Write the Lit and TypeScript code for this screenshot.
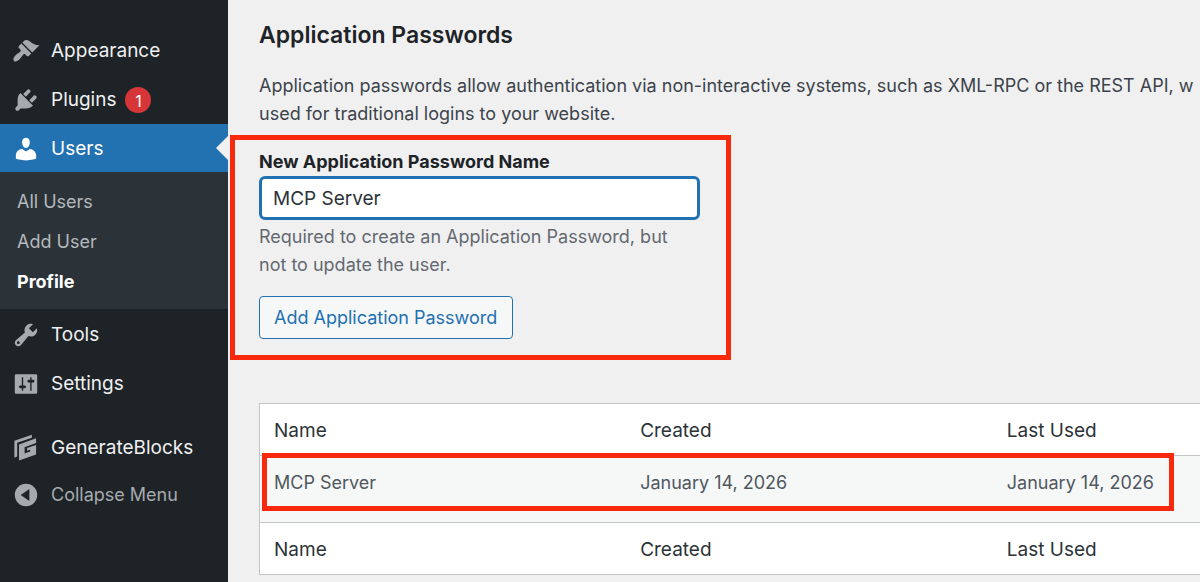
import { LitElement, html, css, svg, nothing } from "lit";
import { customElement, property, state } from "lit/decorators.js";
import { classMap } from "lit/directives/class-map.js";

const icons: Record<string, unknown> = {
  appearance: svg`<path d="M14.48 11.06L7.41 3.99l1.5-1.5c.5-.56 2.3-.47 3.51.32 1.21.8 1.43 1.28 2.91 2.1 1.18.64 2.45 1.26 4.45.85zm-.71.71L6.7 4.7 4.93 6.47c-.39.39-.39 1.02 0 1.41l1.06 1.06c.39.39.39 1.03 0 1.42-.6.6-1.43 1.11-2.21 1.69-.35.26-.7.53-1.01.84C1.43 14.23.4 16.08 1.4 17.07c.99 1 2.84-.03 4.18-1.36.31-.31.58-.66.85-1.02.57-.78 1.08-1.61 1.69-2.21.39-.39 1.02-.39 1.41 0l1.06 1.06c.39.39 1.02.39 1.41 0z"/>`,
  plugins: svg`<path d="M13.11 4.36L9.87 7.6 8 5.73l3.24-3.24c.35-.34 1.05-.2 1.56.32.52.51.66 1.21.31 1.55zm-8 1.77l.91-1.12 9.01 9.01-1.19.84c-.71.71-2.63 1.16-3.82 1.16H6.14L4.9 17.26c-.59.59-1.54.59-2.12 0-.59-.58-.59-1.53 0-2.12l1.24-1.24v-3.88c0-1.13.4-3.19 1.09-3.89zm7.26 3.97l3.24-3.24c.34-.35 1.04-.21 1.55.31.52.51.66 1.21.31 1.55l-3.24 3.25z"/>`,
  users: svg`<path d="M10 9.25c-2.27 0-2.73-3.44-2.73-3.44C7 4.02 7.82 2 9.97 2c2.16 0 2.98 2.02 2.71 3.81 0 0-.41 3.44-2.68 3.44zm0 2.57L12.72 10c2.39 0 4.52 2.33 4.52 4.53v2.49s-3.65 1.13-7.24 1.13c-3.65 0-7.24-1.13-7.24-1.13v-2.49c0-2.25 1.94-4.48 4.47-4.48z"/>`,
  tools: svg`<path d="M16.68 9.77c-1.34 1.34-3.3 1.67-4.95.99l-5.41 6.52c-.99.99-2.59.99-3.58 0s-.99-2.59 0-3.57l6.52-5.42c-.68-1.65-.35-3.61.99-4.95 1.28-1.28 3.12-1.62 4.72-1.06l-2.89 2.89 2.82 2.82 2.86-2.87c.53 1.58.18 3.39-1.08 4.65zM3.81 16.21c.4.39 1.04.39 1.43 0 .4-.4.4-1.04 0-1.43-.39-.4-1.03-.4-1.43 0-.39.39-.39 1.03 0 1.43z"/>`,
  settings: svg`<path d="M18 16V4c0-.55-.45-1-1-1H3c-.55 0-1 .45-1 1v12c0 .55.45 1 1 1h14c.55 0 1-.45 1-1zM8 11h1c.55 0 1 .45 1 1s-.45 1-1 1H8v1.5c0 .28-.22.5-.5.5s-.5-.22-.5-.5V13H6c-.55 0-1-.45-1-1s.45-1 1-1h1V5.5c0-.28.22-.5.5-.5s.5.22.5.5V11zm5-2h-1c-.55 0-1-.45-1-1s.45-1 1-1h1V5.5c0-.28.22-.5.5-.5s.5.22.5.5V7h1c.55 0 1 .45 1 1s-.45 1-1 1h-1v5.5c0 .28-.22.5-.5.5s-.5-.22-.5-.5V9z"/>`,
  blocks: svg`<path d="M1.7 4.9L14.2.6v2L3.7 6.3v9.8l-2 .8z"/><path d="M5 7.5L17.2 3.1v3.4L9 9.4v4.5l4-1.4v-1.3l-2.2.8V10l6.4-2.2v6.8L5 18.9z"/>`,
  collapse: svg`<path fill-rule="evenodd" d="M10 2a8 8 0 1 1 0 16a8 8 0 1 1 0-16zM12.4 5.8v8.4L6.2 10z"/>`,
};

interface MenuItem {
  icon: string;
  label: string;
  badge?: number;
  current?: boolean;
  spaced?: boolean;
  children?: string[];
}

@customElement("admin-menu")
export class AdminMenu extends LitElement {
  @property({ attribute: false }) items: MenuItem[] = [];
  @property() page = "";

  static styles = css`
    :host { display: block; background: #1d2327; color: #f0f0f1; }
    ul { list-style: none; margin: 0; padding: 0; }
    .menu { display: flex; flex-direction: column; gap: 1px; padding-top: 26px; }
    .spaced { margin-top: 15px; }
    .link {
      display: flex; align-items: center; width: 100%; height: 48px; box-sizing: border-box;
      padding: 1px 12px 0; gap: 11px; border: 0; background: none; color: inherit;
      font: inherit; font-size: 19px; text-align: left; text-decoration: none; white-space: nowrap;
    }
    .icon { flex: none; width: 28px; height: 28px; fill: #a7aaad; }
    .current > .link { position: relative; background: #2271b1; color: #fff; }
    .current > .link .icon { fill: #fff; }
    .current > .link::after {
      content: ""; position: absolute; right: 0; top: 12px;
      border: 12px solid transparent; border-left: 0; border-right: 12px solid #f0f0f1;
    }
    .badge {
      display: grid; place-items: center; width: 26px; height: 26px; margin-left: -2px;
      border-radius: 50%; background: #d63638; color: #fff; font-size: 16px;
    }
    .submenu { padding: 10px 0 7px; background: #2c3338; }
    .sub {
      display: block; padding: 0 17px; color: #b4b9be; font-size: 18px; line-height: 40px;
      text-decoration: none;
    }
    .sub.on { color: #fff; font-weight: 700; }
    .collapse { height: 44px; color: #a7aaad; font-size: 18px; cursor: pointer; }
  `;

  private icon(name: string) {
    return html`<svg class="icon" viewBox="0 0 20 20" aria-hidden="true">${icons[name]}</svg>`;
  }

  render() {
    return html`<nav aria-label="Main menu">
      <ul class="menu">
        ${this.items.map(
          (i) => html`<li class=${classMap({ current: !!i.current, spaced: !!i.spaced })}>
            <a class="link" href="#">${this.icon(i.icon)}<span>${i.label}</span>${i.badge
              ? html`<span class="badge">${i.badge}</span>`
              : nothing}</a>
            ${i.children
              ? html`<ul class="submenu">
                  ${i.children.map(
                    (c) => html`<li><a class=${classMap({ sub: true, on: c === this.page })} href="#">${c}</a></li>`
                  )}
                </ul>`
              : nothing}
          </li>`
        )}
        <li><button class="link collapse" type="button">${this.icon("collapse")}<span>Collapse Menu</span></button></li>
      </ul>
    </nav>`;
  }
}

@customElement("app-root")
export class AppRoot extends LitElement {
  @state() private name = "MCP Server";

  private menu: MenuItem[] = [
    { icon: "appearance", label: "Appearance" },
    { icon: "plugins", label: "Plugins", badge: 1 },
    { icon: "users", label: "Users", current: true, children: ["All Users", "Add User", "Profile"] },
    { icon: "tools", label: "Tools" },
    { icon: "settings", label: "Settings" },
    { icon: "blocks", label: "GenerateBlocks", spaced: true },
  ];
  private columns = ["Name", "Created", "Last Used"];
  private rows = [["MCP Server", "January 14, 2026", "January 14, 2026"]];

  static styles = css`
    :host {
      display: grid; grid-template-columns: 228px minmax(0, 1fr); min-height: 100vh;
      background: #f0f0f1; color: #3c434a;
      font-family: Inter, "Liberation Sans", sans-serif; font-size: 18px; line-height: 28px;
    }
    main { padding: 21px 0 7px 31px; overflow: hidden; }
    h2 { margin: 0; color: #1d2327; font-size: 23px; line-height: 28px; font-weight: 600; }
    .intro { margin: 23px 0 0; white-space: nowrap; }
    .new { position: relative; width: 441px; margin-top: 20px; }
    label { display: block; color: #1d2327; font-weight: 700; }
    .name {
      display: block; width: 100%; height: 44px; box-sizing: border-box; padding: 0 11px;
      border: 3px solid #2271b1; border-radius: 6px; background: #fff; color: #2c3338;
      font: inherit; font-size: 19px; outline: 0;
    }
    .hint { margin: 3px 0 17px; color: #646970; }
    .add {
      height: 43px; padding: 0 15px 0 14px; border: 1px solid #2271b1; border-radius: 4px;
      background: #f6f7f7; color: #2271b1; font: inherit; cursor: pointer;
    }
    .mark { position: absolute; border: 5px solid #f9290e; pointer-events: none; }
    .new .mark { inset: -13px -31px -21px -29px; }
    .list { position: relative; margin-top: 64px; }
    .list .mark { inset: 50px 26px 64px 3px; }
    table {
      width: 117%; table-layout: fixed; border-collapse: collapse;
      border: 1px solid #c3c4c7; background: #fff;
    }
    th, td { padding: 0 14px; text-align: left; }
    th { height: 49px; padding-top: 2px; color: #2c3338; font-size: 19px; font-weight: 400; }
    td { height: 54px; padding-bottom: 12px; background: #f6f7f7; color: #50575e; }
    tbody tr { border-top: 1px solid #c3c4c7; border-bottom: 1px solid #c3c4c7; }
  `;

  private heads() {
    return html`<tr>${this.columns.map((c) => html`<th scope="col">${c}</th>`)}</tr>`;
  }

  render() {
    return html`
      <admin-menu .items=${this.menu} page="Profile"></admin-menu>
      <main>
        <h2>Application Passwords</h2>
        <p class="intro">
          Application passwords allow authentication via non-interactive systems, such as XML-RPC or the REST API, w<br />
          used for traditional logins to your website.
        </p>
        <section class="new">
          <label for="name">New Application Password Name</label>
          <input
            class="name" id="name" type="text" aria-describedby="hint" .value=${this.name}
            @input=${(e: Event) => (this.name = (e.target as HTMLInputElement).value)}
          />
          <p class="hint" id="hint">Required to create an Application Password, but not to update the user.</p>
          <button class="add" type="button">Add Application Password</button>
          <div class="mark"></div>
        </section>
        <section class="list">
          <table>
            <thead>${this.heads()}</thead>
            <tbody>${this.rows.map((r) => html`<tr>${r.map((c) => html`<td>${c}</td>`)}</tr>`)}</tbody>
            <tfoot>${this.heads()}</tfoot>
          </table>
          <div class="mark"></div>
        </section>
      </main>
    `;
  }
}
